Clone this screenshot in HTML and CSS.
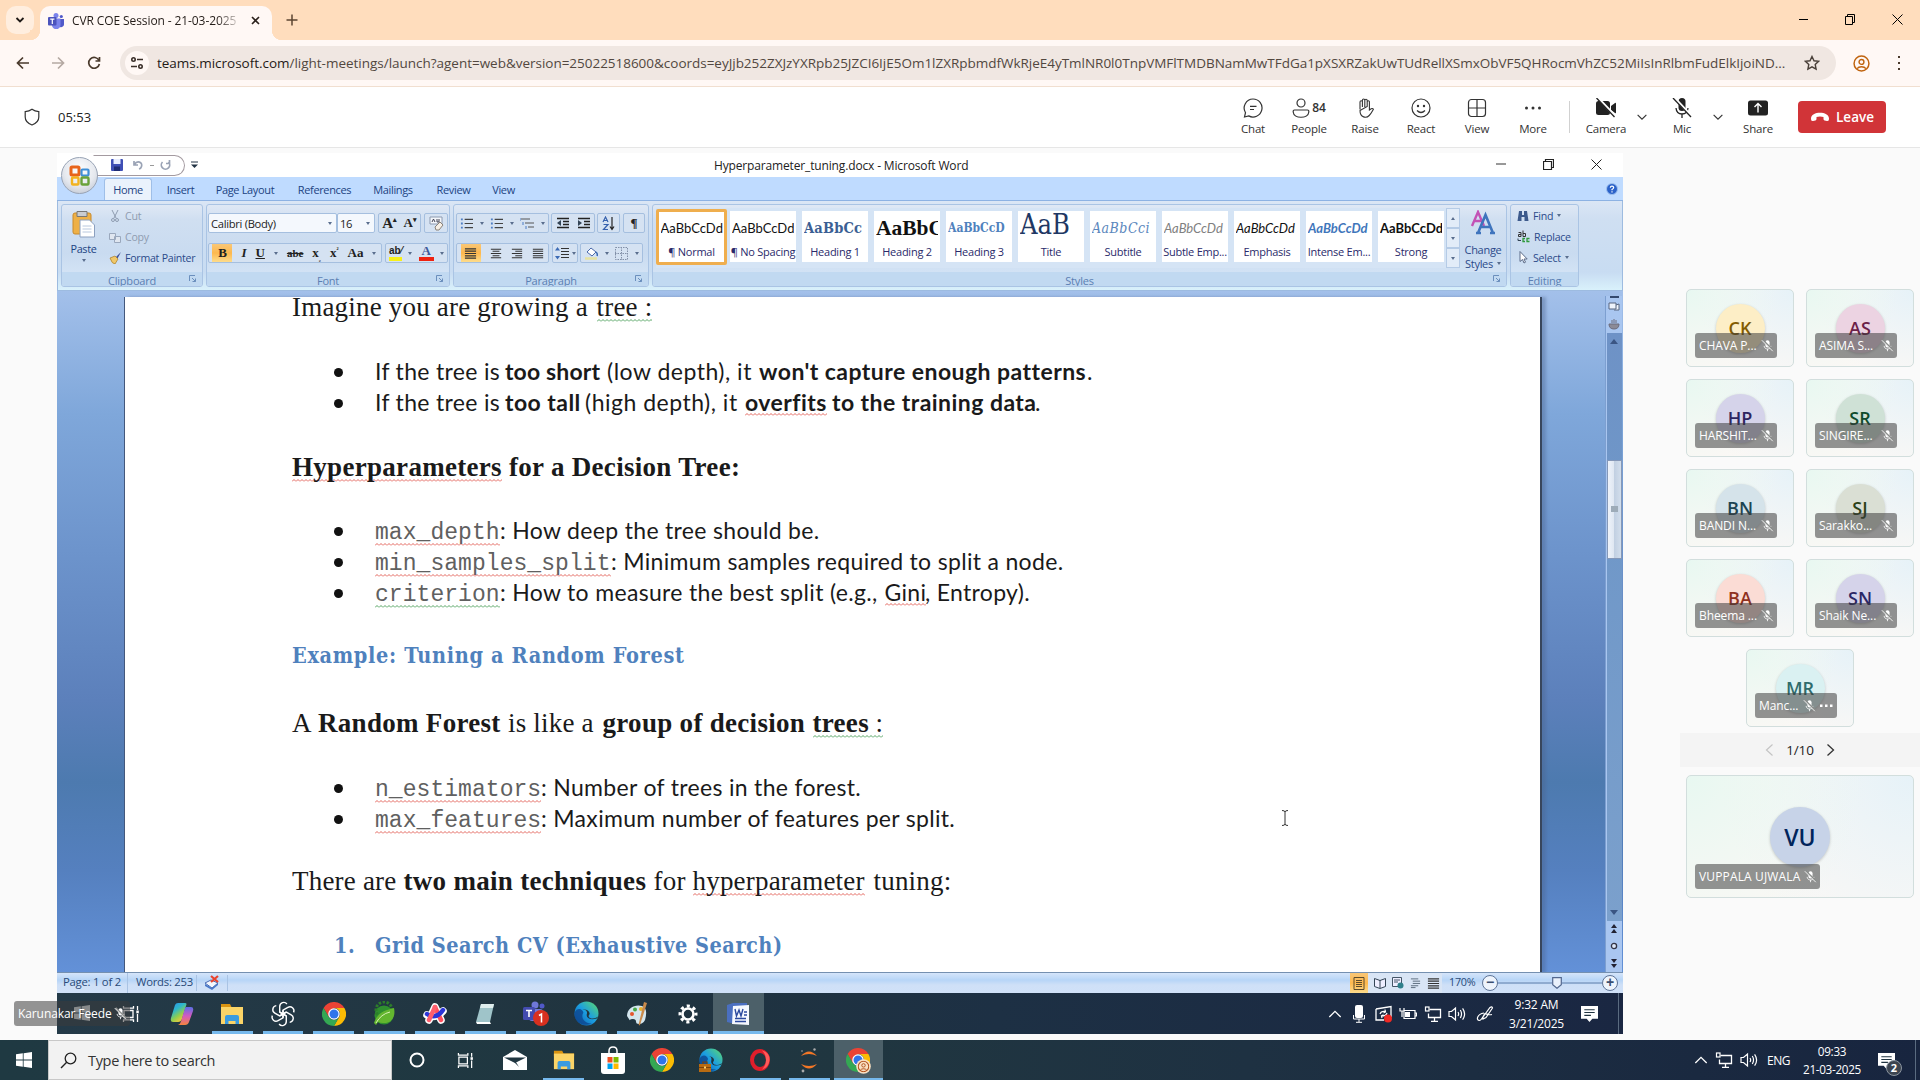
FILE: index.html
```html
<!DOCTYPE html>
<html lang="en">
<head>
<meta charset="utf-8">
<title>CVR COE Session - 21-03-2025</title>
<link rel="stylesheet" href="styles.css">
</head>
<body>
<svg class="defs" aria-hidden="true">
  <defs>
    <linearGradient id="gEdge" x1="0" y1="1" x2="1" y2="0"><stop offset="0" stop-color="#0c59a4"/><stop offset=".5" stop-color="#1b9de2"/><stop offset="1" stop-color="#5fdc6a"/></linearGradient>
    <linearGradient id="gCop" x1="0" y1="0" x2=".6" y2="1"><stop offset="0" stop-color="#2a8df4"/><stop offset=".4" stop-color="#2fb7c9"/><stop offset=".7" stop-color="#8fce4e"/><stop offset="1" stop-color="#f5c83d"/></linearGradient>
    <linearGradient id="gCop2" x1="0" y1="0" x2="0" y2="1"><stop offset="0" stop-color="#5a6fe8"/><stop offset=".5" stop-color="#d35bc0"/><stop offset="1" stop-color="#f5843d"/></linearGradient>
    <symbol id="mute" viewBox="0 0 16 16"><rect x="5.500" y="1.500" width="5" height="9" rx="2.500" fill="currentColor"/><path fill="none" stroke="currentColor" d="M3.800 8.500c.3 2.500 2 3.800 4.200 3.800s3.900-1.300 4.200-3.800M8 12.300v2.700"/><path stroke="#8b8e8c" stroke-width="2.200" d="M2 1l13 13"/><path stroke="currentColor" stroke-width="1.100" d="M1 1.500l13.500 13.500"/></symbol>
    <symbol id="win" viewBox="0 0 16 16"><path fill="currentColor" d="M0 2.300L6.800 1.300V7.600H0zM7.600 1.200L16 0V7.600H7.600zM0 8.400H6.800V14.700L0 13.700zM7.600 8.400H16V16L7.600 14.800z"/></symbol>
    <symbol id="taskview" viewBox="0 0 18 18"><path fill="none" stroke="currentColor" stroke-width="1.300" d="M2 5.500h9v7H2zM1.500 1v2.200h10V1M1.500 17v-2.200h10V17M15.500 1v4M15.500 9v8"/><rect x="14.300" y="5.500" width="2.500" height="2.800" fill="currentColor"/></symbol>
    <symbol id="folder" viewBox="0 0 24 24"><path fill="#d99311" d="M1 2h9l1.500 3H23v3H1z"/><path fill="#fbd467" d="M1 5h22v17H1z"/><path fill="#3a9be0" d="M5 22v-7a2 2 0 0 1 2-2h10a2 2 0 0 1 2 2v7h-3.500v-3h-7v3z"/></symbol>
    <symbol id="chrome" viewBox="0 0 48 48"><path fill="#ea4335" d="M24 12H44.800A24 24 0 0 0 3.200 12l10.400 18z"/><path fill="#fbbc04" d="M44.800 12A24 24 0 0 1 24 48l10.400-18A12 12 0 0 0 24 12z"/><path fill="#34a853" d="M3.200 12A24 24 0 0 0 24 48l10.400-18a12 12 0 0 1-20.800 0z"/><circle cx="24" cy="24" r="11.500" fill="#fff"/><circle cx="24" cy="24" r="9" fill="#2f74ea"/></symbol>
    <symbol id="edge" viewBox="0 0 24 24"><circle cx="12" cy="12" r="11.500" fill="url(#gEdge)"/><path fill="#0d4a94" d="M9 11c-3 5 1 11 8 10.500C8 26-1 19 .6 11 3 6 8 7 9 11z" opacity=".85"/><path fill="#203640" d="M23.500 14.500c-2 3-9 3.300-9.500.2-.1-1 1-1.300 1-3C14.500 9 11 7.500 8 8.500c4-.8 5 2 4.300 4-.8 3.500 2.700 6.500 9.700 4.300z"/></symbol>
    <symbol id="net" viewBox="0 0 18 18"><path fill="none" stroke="currentColor" stroke-width="1.300" d="M5.500 4.500h11v8h-12v-4M10.500 12.500v3.500M7 16.300h7"/><rect x="1.500" y="2" width="3.500" height="4" fill="none" stroke="currentColor" stroke-width="1.200"/></symbol>
    <symbol id="vol" viewBox="0 0 18 18"><path fill="none" stroke="currentColor" stroke-width="1.200" d="M1 6.500h2.500l4-3.500v12l-4-3.500H1zM10 7q1.300 2 0 4M12.300 5q2.500 4 0 8M14.600 3.300q4 5.700 0 11.400"/></symbol>
    <symbol id="up" viewBox="0 0 16 16"><path fill="none" stroke="currentColor" stroke-width="1.500" d="M1.500 11.500L8 5l6.500 6.500"/></symbol>
    <symbol id="down" viewBox="0 0 16 16"><path fill="none" stroke="currentColor" stroke-width="1.300" d="M3 5.500l5 5 5-5"/></symbol>
    <symbol id="note" viewBox="0 0 18 18"><path fill="currentColor" d="M0 1h18v13.500h-6L9 18l-3-3.500H0z"/><path stroke="#1f3340" stroke-width="1.200" d="M3.500 5h11M3.500 8h11M3.500 11h7"/></symbol>
    <symbol id="launch" viewBox="0 0 8 8"><path fill="none" stroke="#6b8fbd" d="M.5 6V.5H6M3 3l3.500 3.500M6.500 3.500v3h-3"/></symbol>
    <symbol id="lines" viewBox="0 0 14 14"><path stroke="#333" stroke-width="1.200" d="M1 2h12M1 4.500h12M1 7h12M1 9.500h12M1 12h12"/></symbol>
    <symbol id="bullets" viewBox="0 0 14 14"><path stroke="#444" stroke-width="1.200" d="M5 2.500h9M5 7h9M5 11.500h9"/><path stroke="#4c7cc4" stroke-width="2" d="M1 2.500h2M1 7h2M1 11.500h2"/></symbol>
    <symbol id="person" viewBox="0 0 16 16"><circle cx="8" cy="8" r="7" fill="none" stroke="currentColor" stroke-width="1.400"/><circle cx="8" cy="6.500" r="2.300" fill="none" stroke="currentColor" stroke-width="1.300"/><path fill="none" stroke="currentColor" stroke-width="1.300" d="M3.800 12.800c1.800-2.400 6.600-2.400 8.400 0"/></symbol>
  </defs>
</svg>

<div class="screen">
  <header class="tabstrip">
    <button class="tabsearch"><svg width="10" height="10" viewBox="0 0 10 10"><path d="M1.500 3l3.500 3.500L8.500 3" fill="none" stroke="#1f1a17" stroke-width="1.800"/></svg></button>
    <div class="tab">
      <svg width="16" height="16" viewBox="0 0 16 16"><circle cx="8" cy="2.600" r="2.500" fill="#7b83eb"/><circle cx="13.300" cy="3.500" r="1.600" fill="#5059c9"/><path fill="#5059c9" d="M10 6h6v5a3 3 0 0 1-4 3z"/><path fill="#7b83eb" d="M4 5.500h8.500V12a4.200 4.200 0 0 1-8.500 0z"/><rect y="4" width="8.500" height="8.500" rx="1" fill="#4b53bc"/><path stroke="#fff" stroke-width="1.200" d="M2.200 6.200h4.200M4.300 6v5"/></svg>
      <span class="tabtitle">CVR COE Session - 21-03-2025</span>
      <svg width="9" height="9" viewBox="0 0 9 9"><path d="M1 1l7 7M8 1L1 8" stroke="#2b211c" stroke-width="1.600"/></svg>
    </div>
    <svg class="newtab" width="12" height="12" viewBox="0 0 12 12"><path d="M6 .5v11M.5 6h11" stroke="#5c4430" stroke-width="1.500"/></svg>
    <div class="wincontrols">
      <svg width="10" height="10" viewBox="0 0 10 10"><path d="M0 5.500h9" stroke="#000"/></svg>
      <svg width="11" height="11" viewBox="0 0 11 11"><path d="M.5 2.500h7v8h-7zM2.500 2.500v-2h7v8h-2" fill="none" stroke="#000"/></svg>
      <svg width="11" height="11" viewBox="0 0 11 11"><path d="M.5.5l10 10M10.500.5l-10 10" stroke="#000"/></svg>
    </div>
  </header>
  <div class="addressbar">
    <svg width="14" height="14" viewBox="0 0 14 14"><path d="M13 7H1.500M7 1.500L1.500 7 7 12.500" fill="none" stroke="#4a3a2c" stroke-width="1.700"/></svg>
    <svg width="14" height="14" viewBox="0 0 14 14"><path d="M1 7h11.500M7 1.500L12.500 7 7 12.500" fill="none" stroke="#b5a9a2" stroke-width="1.700"/></svg>
    <svg width="14" height="14" viewBox="0 0 14 14"><path d="M12 4.500A5.400 5.400 0 1 0 12.400 8M12.500 1v4H8.500" fill="none" stroke="#4a3a2c" stroke-width="1.700"/></svg>
    <div class="omnibox">
      <span class="site"><svg width="14" height="14" viewBox="0 0 14 14"><g fill="none" stroke="#3a2f29" stroke-width="1.600"><circle cx="3.500" cy="3.500" r="1.700"/><path d="M7 3.500h6M1 10.500h6"/><circle cx="10.500" cy="10.500" r="1.700"/></g></svg></span>
      <span class="url"><b>teams.microsoft.com</b>/light-meetings/launch?agent=web&amp;version=25022518600&amp;coords=eyJjb252ZXJzYXRpb25JZCI6IjE5Om1lZXRpbmdfWkRjeE4yTmlNR0l0TnpVMFlTMDBNamMwTFdGa1pXSXRZakUwTUdRellXSmxObVF5QHRocmVhZC52MiIsInRlbmFudElkIjoiND...</span>
      <svg class="star" width="16" height="16" viewBox="0 0 16 16"><path d="M8 1.500l2 4.300 4.600.5-3.400 3.200.9 4.700L8 11.900l-4.100 2.300.9-4.700L1.400 6.300 6 5.800z" fill="none" stroke="#4a4039" stroke-width="1.400"/></svg>
    </div>
    <svg class="profile" width="17" height="17"><use href="#person"/></svg>
    <svg width="4" height="16" viewBox="0 0 4 16"><path d="M1 1h2v2H1zM1 7h2v2H1zM1 13h2v2H1z" fill="#4a3a2c"/></svg>
  </div>

  <div class="meetingbar">
    <svg width="18" height="18" viewBox="0 0 18 18"><path d="M9 1.200c2 1.500 4.200 2.200 6.800 2.400V9c0 3.800-2.500 6.400-6.800 8-4.300-1.600-6.800-4.200-6.800-8V3.600C4.800 3.400 7 2.700 9 1.200z" fill="none" stroke="#333" stroke-width="1.200"/></svg>
    <span class="timer">05:53</span>
    <div class="tools">
      <div class="tool"><svg width="20" height="20" viewBox="0 0 20 20"><path d="M10 1a9 9 0 1 1-4.300 16.900L1.500 19l1-4.300A9 9 0 0 1 10 1zM7 8.300h6.500M7 11.500h4" fill="none" stroke="#333" stroke-width="1.200"/></svg><span>Chat</span></div>
      <div class="tool"><div class="count"><svg width="18" height="20" viewBox="0 0 18 20"><circle cx="9" cy="5" r="4" fill="none" stroke="#333" stroke-width="1.200"/><path d="M2.500 12h13q1.500 0 1.300 2c-.5 7-15.100 7-15.600 0q-.2-2 1.300-2z" fill="none" stroke="#333" stroke-width="1.200"/></svg><b>84</b></div><span>People</span></div>
      <div class="tool"><svg width="18" height="20" viewBox="0 0 18 20"><path d="M4 11.500V4q0-1.300 1.200-1.300T6.400 4v5M6.400 8.500V2.300Q6.400 1 7.600 1t1.200 1.300V9M8.800 8.500v-6q0-1.200 1.200-1.200t1.200 1.200V9M11.200 8.500V4q0-1.200 1.100-1.200T13.400 4v8c2-1.500 3.300-2 4-.8-1.400 2.300-2.400 4.500-4.200 6.300C10.500 20.300 4 20 4 12.500z" fill="none" stroke="#333" stroke-width="1.100"/></svg><span>Raise</span></div>
      <div class="tool"><svg width="20" height="20" viewBox="0 0 20 20"><circle cx="10" cy="10" r="9" fill="none" stroke="#333" stroke-width="1.200"/><circle cx="7" cy="8" r="1.200" fill="#333"/><circle cx="13" cy="8" r="1.200" fill="#333"/><path d="M6 12.500q4 4 8 0" fill="none" stroke="#333" stroke-width="1.200"/></svg><span>React</span></div>
      <div class="tool"><svg width="20" height="20" viewBox="0 0 20 20"><rect x="1.500" y="1.500" width="17" height="17" rx="3" fill="none" stroke="#333" stroke-width="1.200"/><path d="M10 1.500v17M1.500 10h17" stroke="#333" stroke-width="1.200"/></svg><span>View</span></div>
      <div class="tool"><svg width="20" height="20" viewBox="0 0 20 20"><circle cx="3.500" cy="10" r="1.500" fill="#333"/><circle cx="10" cy="10" r="1.500" fill="#333"/><circle cx="16.500" cy="10" r="1.500" fill="#333"/></svg><span>More</span></div>
    </div>
    <i class="divider"></i>
    <div class="devices">
      <div class="tool"><svg width="22" height="20" viewBox="0 0 22 20"><rect x="1" y="3" width="14" height="14" rx="2.500" fill="#222"/><path d="M16 8l4-3q1-.6 1 .5v9q0 1.100-1 .5l-4-3z" fill="#222"/><path d="M3 0l18 19" stroke="#fff" stroke-width="2.600"/><path d="M1.500 0l18 19" stroke="#222" stroke-width="1.300"/></svg><span>Camera</span></div>
      <svg class="caret first" width="14" height="14"><use href="#down"/></svg>
      <div class="tool mic"><svg width="20" height="20" viewBox="0 0 20 20"><rect x="6.500" y="0" width="7" height="13" rx="3.500" fill="#222"/><path d="M4 10q.5 6 6 6t6-6M10 16v4" fill="none" stroke="#222" stroke-width="1.300"/><path d="M2.500 0l17 18" stroke="#fff" stroke-width="2.600"/><path d="M1 0l18 19" stroke="#222" stroke-width="1.300"/></svg><span>Mic</span></div>
      <svg class="caret" width="14" height="14"><use href="#down"/></svg>
      <div class="tool share"><svg width="20" height="20" viewBox="0 0 20 20"><rect y="2.500" width="20" height="15" rx="2.500" fill="#222"/><path d="M10 14.500V6M6.500 9L10 5.500 13.500 9" fill="none" stroke="#fff" stroke-width="1.400"/></svg><span>Share</span></div>
    </div>
    <button class="leave"><svg width="20" height="10" viewBox="0 0 20 10"><path d="M10 .8c4.500 0 9 2 9 5.700 0 2-.6 2.600-2 2.400l-2.300-.5c-1-.3-1.200-.8-1.200-2V5.100c-2-.8-5-.8-7 0v1.300c0 1.200-.2 1.700-1.200 2L3 8.900C1.600 9.100 1 8.500 1 6.500 1 2.800 5.500.8 10 .8z" fill="#fff"/></svg><span>Leave</span></button>
  </div>

  <main class="stage">
    <section class="shared">
      <div class="wtitle">
        <div class="qat">
          <svg width="12" height="12" viewBox="0 0 12 12"><rect width="12" height="12" rx="1" fill="#3f4fb5"/><rect x="2.500" y="0" width="7" height="5" fill="#e8edff"/><rect x="3" y="7.500" width="6" height="4.500" fill="#1f2c74"/></svg>
          <svg width="12" height="12" viewBox="0 0 12 12"><path d="M2 2v4h4M2.500 5.500C5 1 11 3 9.500 7.500Q9 9.500 7 10" fill="none" stroke="#9aa3b5" stroke-width="1.700"/></svg>
          <i class="dash"></i>
          <svg width="12" height="12" viewBox="0 0 12 12"><path d="M2.500 3a4.200 4.200 0 1 0 6 0M9.500 1v3.500H6" fill="none" stroke="#9aa3b5" stroke-width="1.700"/></svg>
        </div>
        <svg class="qatmore" width="7" height="8" viewBox="0 0 7 8"><path d="M0 1h7" stroke="#234"/><path d="M0 3.500h7L3.500 7z" fill="#234"/></svg>
        <span class="doctitle">Hyperparameter_tuning.docx - Microsoft Word</span>
        <div class="wwin">
          <svg width="10" height="10" viewBox="0 0 10 10"><path d="M0 5h10" stroke="#333"/></svg>
          <svg width="11" height="11" viewBox="0 0 11 11"><path d="M.5 2.500h8v8h-8zM2.500 2.500v-2h8v8h-2" fill="none" stroke="#222" stroke-width="1.200"/></svg>
          <svg width="11" height="11" viewBox="0 0 11 11"><path d="M.5.5l10 10M10.500.5l-10 10" stroke="#222"/></svg>
        </div>
        <div class="orb"><svg width="24" height="24" viewBox="0 0 24 24"><g fill="none" stroke-width="3"><rect x="3" y="3" width="8" height="8" rx="1" stroke="#e8641b"/><rect x="13.500" y="5.500" width="7" height="6" rx="1" stroke="#3f8fd6" stroke-width="2.200"/><rect x="4" y="13.500" width="6.500" height="7" rx="1" stroke="#f2b320" stroke-width="2.400"/><rect x="13.500" y="13.500" width="7" height="7" rx="1" stroke="#6aa23a" stroke-width="2.400"/></g></svg></div>
      </div>
      <nav class="wtabs">
        <span class="on">Home</span><span>Insert</span><span>Page Layout</span><span>References</span><span>Mailings</span><span>Review</span><span>View</span>
        <svg class="help" width="12" height="12" viewBox="0 0 12 12"><circle cx="6" cy="6" r="5.500" fill="#2b62c9" stroke="#9fc0ee"/><path d="M4.300 4.700q.1-1.500 1.700-1.500t1.700 1.400Q7.700 5.700 6 6.500v.8M6 8.200v1.200" fill="none" stroke="#fff" stroke-width="1.200"/></svg>
      </nav>
      <div class="ribbon">
        <div class="group clip">
          <div class="gbody">
            <div class="paste"><svg width="24" height="28" viewBox="0 0 24 28"><rect x="1" y="3" width="18" height="21" rx="2" fill="#eeb047" stroke="#c98a2b"/><path d="M5 1.500h10v5H5z" fill="#c9ccd2" stroke="#777"/><path d="M8 10h9.500l5 5v12H8z" fill="#fff" stroke="#8ca0bf"/><path d="M10.500 16h9M10.500 19h9M10.500 22h9" stroke="#b9c8de"/></svg><span>Paste</span><i class="tri"></i></div>
            <div class="clipcmds">
              <div class="cmd dim"><svg width="12" height="12" viewBox="0 0 12 12"><path d="M3 0l4 8M9 0L5 8" stroke="#8f9cb0"/><circle cx="4" cy="10" r="1.500" fill="none" stroke="#8f9cb0"/><circle cx="8" cy="10" r="1.500" fill="none" stroke="#8f9cb0"/></svg><span>Cut</span></div>
              <div class="cmd dim"><svg width="12" height="12" viewBox="0 0 12 12"><path d="M.5 2.500h6v6h-6zM5.500 5.500h6v6h-6z" fill="#dfe6f0" stroke="#9aa8bd"/></svg><span>Copy</span></div>
              <div class="cmd"><svg width="12" height="12" viewBox="0 0 12 12"><path d="M12 0L7 5l1.500 1.500z" fill="#3b4f9a"/><path d="M1 6l5-2 3 3-3 5q-3 0-5-6z" fill="#f0c869" stroke="#a77a22" stroke-width=".7"/></svg><span>Format Painter</span></div>
            </div>
          </div>
          <div class="glabel"><span>Clipboard</span><svg width="8" height="8"><use href="#launch"/></svg></div>
        </div>
        <div class="group font">
          <div class="gbody rows">
            <div class="brow">
              <div class="box white f1"><span>Calibri (Body)</span><i class="tri"></i></div>
              <div class="box white f2"><span>16</span><i class="tri"></i></div>
              <div class="box f3"><b class="big">A<sup>▴</sup></b><b>A<sup>▾</sup></b></div>
              <div class="box f4"><svg width="15" height="15" viewBox="0 0 15 15"><path d="M1 1h12v7H1z" fill="#f3f6fb" stroke="#8c9ab0"/><path d="M3 6l1.500-3L6 6M8 3v3h2V3" fill="none" stroke="#445"/><path d="M6 11l5-5 3 3-4 5H7z" fill="#f6efe6" stroke="#8b8277"/></svg></div>
            </div>
            <div class="brow">
              <div class="box f5"><span class="hot"><b>B</b></span><i class="it">I</i><u>U</u><i class="tri"></i><s>abe</s><b>x<sub>₂</sub></b><b>x<sup>²</sup></b><b>Aa</b><i class="tri"></i></div>
              <div class="box f6"><span class="hl">ab⁄</span><i class="tri"></i><span class="fc">A</span><i class="tri"></i></div>
            </div>
          </div>
          <div class="glabel"><span>Font</span><svg width="8" height="8"><use href="#launch"/></svg></div>
        </div>
        <div class="group para">
          <div class="gbody rows">
            <div class="brow">
              <div class="box p1"><svg width="13" height="13"><use href="#bullets"/></svg><i class="tri"></i><svg width="13" height="13"><use href="#bullets"/></svg><i class="tri"></i><svg width="14" height="13" viewBox="0 0 14 13"><path d="M1 2h9M5 6h9M8 10h6" stroke="#555"/><path d="M0 1v3M3 5v3M6 9v3" stroke="#4c7cc4"/></svg><i class="tri"></i></div>
              <div class="box p2"><svg width="14" height="13" viewBox="0 0 14 13"><path d="M1 1.500h12M7 4.500h6M7 7.500h6M1 10.500h12" stroke="#222" stroke-width="1.300"/><path d="M5 3v6L1 6z" fill="#345"/></svg><svg width="14" height="13" viewBox="0 0 14 13"><path d="M1 1.500h12M7 4.500h6M7 7.500h6M1 10.500h12" stroke="#222" stroke-width="1.300"/><path d="M1 3v6l4-3z" fill="#345"/></svg></div>
              <div class="box p3"><svg width="13" height="15" viewBox="0 0 13 15"><path d="M1 6l2.500-5L6 6M2 4.500h3M1.500 8.500H6l-4.500 5H6" fill="none" stroke="#3560ad" stroke-width="1.200"/><path d="M10 1v12M8 10.500l2 3 2-3" fill="none" stroke="#222" stroke-width="1.200"/></svg></div>
              <div class="box p4"><b>¶</b></div>
            </div>
            <div class="brow">
              <div class="box p1"><span class="hot"><svg width="13" height="13"><use href="#lines"/></svg></span><svg width="12" height="13" viewBox="0 0 14 14"><path stroke="#333" stroke-width="1.200" d="M1 2h12M3 4.500h8M1 7h12M3 9.500h8M1 12h12"/></svg><svg width="12" height="13" viewBox="0 0 14 14"><path stroke="#333" stroke-width="1.200" d="M1 2h12M5 4.500h8M1 7h12M5 9.500h8M1 12h12"/></svg><svg width="12" height="13"><use href="#lines"/></svg></div>
              <div class="box p5"><svg width="14" height="13" viewBox="0 0 14 13"><path stroke="#333" d="M6 1.500h8M6 4.500h8M6 7.500h8M6 10.500h8"/><path fill="#3c6bb5" d="M2.500 0L5 3.500H0zM2.500 12.500L5 9H0z"/></svg><i class="tri"></i></div>
              <div class="box p6"><svg width="14" height="14" viewBox="0 0 14 14"><path d="M3 6l4-4 5 4-4 4z" fill="#fff" stroke="#4a69a8"/><path d="M12 6q2 2 1 4" fill="none" stroke="#3c6bb5" stroke-width="1.500"/><path d="M1 12.500h12" stroke="#e6e2a0" stroke-width="2.500"/></svg><i class="tri"></i><svg width="13" height="13" viewBox="0 0 13 13"><path d="M.5.5h12v12H.500zM6.500 0v13M0 6.500h13" fill="none" stroke="#8290a8" stroke-dasharray="1.500 1"/></svg><i class="tri"></i></div>
            </div>
          </div>
          <div class="glabel"><span>Paragraph</span><svg width="8" height="8"><use href="#launch"/></svg></div>
        </div>
        <div class="group styles">
          <div class="gbody">
            <div class="gallery">
              <div class="sty sel"><p class="cal">AaBbCcDd</p><span>¶ Normal</span></div>
              <div class="sty"><p class="cal">AaBbCcDd</p><span>¶ No Spacing</span></div>
              <div class="sty"><p class="cam c1">AaBbCc</p><span>Heading 1</span></div>
              <div class="sty"><p class="tim">AaBbC</p><span>Heading 2</span></div>
              <div class="sty"><p class="cam c3">AaBbCcD</p><span>Heading 3</span></div>
              <div class="sty"><p class="ttl">AaB</p><span>Title</span></div>
              <div class="sty"><p class="sub">AaBbCci</p><span>Subtitle</span></div>
              <div class="sty"><p class="cal it gr">AaBbCcDd</p><span>Subtle Emp...</span></div>
              <div class="sty"><p class="cal it">AaBbCcDd</p><span>Emphasis</span></div>
              <div class="sty"><p class="cal it bl">AaBbCcDd</p><span>Intense Em...</span></div>
              <div class="sty"><p class="cal bd">AaBbCcDd</p><span>Strong</span></div>
            </div>
            <div class="gscroll"><span><i class="tri upt"></i></span><span><i class="tri"></i></span><span><i class="tri bar"></i></span></div>
            <div class="change"><svg width="26" height="26" viewBox="0 0 26 26"><path d="M2 16L8 2l6 14M4 11h8" fill="none" stroke="#c352b5" stroke-width="2.400"/><path d="M8 23L15.500 5 23 23M11 17h9M6 23h5M20 23h5" fill="none" stroke="#3f74bd" stroke-width="2.600"/></svg><span>Change</span><span class="drop">Styles <i class="tri"></i></span></div>
          </div>
          <div class="glabel"><span>Styles</span><svg width="8" height="8"><use href="#launch"/></svg></div>
        </div>
        <div class="group edit">
          <div class="gbody editb">
            <div class="cmd"><svg width="12" height="12" viewBox="0 0 12 12"><path d="M2 1h3v4h2V1h3l1.500 10h-4V7h-3v4h-4z" fill="#3d5a8c"/></svg><span>Find</span><i class="tri"></i></div>
            <div class="cmd"><svg width="13" height="13" viewBox="0 0 13 13"><path d="M1.500 2.500h2.500v4H1.500v-2H4M6 .5v6h2.500v-3H6" fill="none" stroke="#333"/><path d="M8 8.500H6v3h2M12.500 8.500H10v3h2.500" fill="none" stroke="#2f9a3c" stroke-width="1.300"/><path d="M1 8.500v2h3" fill="none" stroke="#345"/></svg><span>Replace</span></div>
            <div class="cmd"><svg width="12" height="13" viewBox="0 0 12 13"><path d="M3 .5v10l2.500-2 1.500 3.500 1.500-.8L7 8h3.200z" fill="#fff" stroke="#5b6b88"/></svg><span>Select</span><i class="tri"></i></div>
          </div>
          <div class="glabel"><span>Editing</span></div>
        </div>
      </div>
      <div class="canvas">
        <article class="page">
          <div class="ln l1"><span class="t">Imagine you are growing a</span><span class="t"><span class="sg">tree :</span></span></div>
          <div class="ln l2"><span class="dot"></span><span class="c">If the tree is</span><span class="c b">too short</span><span class="c wide">(low depth), it</span><span class="c b">won't capture enough patterns</span><span class="c">.</span></div>
          <div class="ln l3"><span class="dot"></span><span class="c">If the tree is</span><span class="c b">too tall</span><span class="c wide">(high depth), it</span><span class="c b"><span class="sr">overfits</span></span><span class="c b">to the training data</span><span class="c">.</span></div>
          <div class="ln l4"><span class="t b"><span class="sr">Hyperparameters</span></span><span class="t b">for a Decision Tree:</span></div>
          <div class="ln l5"><span class="dot"></span><span class="m"><span class="sr">max_depth</span></span><span class="c">: How deep the tree should be.</span></div>
          <div class="ln l6"><span class="dot"></span><span class="m"><span class="sr">min_samples_split</span></span><span class="c">: Minimum samples required to split a node.</span></div>
          <div class="ln l7"><span class="dot"></span><span class="m"><span class="sg">criterion</span></span><span class="c">: How to measure the best split (e.g.,</span><span class="c"><span class="sr">Gini</span></span><span class="c">, Entropy).</span></div>
          <div class="ln l8"><span class="h">Example: Tuning a Random Forest</span></div>
          <div class="ln l9"><span class="t">A</span><span class="t b">Random Forest</span><span class="t">is like a</span><span class="t b">group of decision</span><span class="t b"><span class="sg">trees</span></span><span class="t"><span class="sg">&nbsp;:</span></span></div>
          <div class="ln l10"><span class="dot"></span><span class="m"><span class="sr">n_estimators</span></span><span class="c">: Number of trees in the forest.</span></div>
          <div class="ln l11"><span class="dot"></span><span class="m"><span class="sr">max_features</span></span><span class="c">: Maximum number of features per split.</span></div>
          <div class="ln l12"><span class="t">There are</span><span class="t b">two main techniques</span><span class="t">for</span><span class="t"><span class="sr">hyperparameter</span></span><span class="t">tuning:</span></div>
          <div class="ln l13"><span class="h">1.</span><span class="h">Grid Search CV (Exhaustive Search)</span></div>
          <svg class="ibeam" width="8" height="16" viewBox="0 0 8 16"><path d="M1 .5q3 0 3 1.500 0-1.500 3-1.500M4 2v12M1 15.500q3 0 3-1.500 0 1.500 3 1.500" fill="none" stroke="#333"/></svg>
        </article>
        <div class="vscroll">
          <i class="split"></i>
          <svg class="v1" width="12" height="10" viewBox="0 0 12 10"><path d="M1 2h7v6H1zM8 4l3-1v6H6" fill="#eef3fb" stroke="#56657f"/></svg>
          <svg class="v2" width="12" height="12" viewBox="0 0 12 12"><path d="M1 6h10q0 5-5 5T1 6zM4 5V2M6 5V1M8 5V2" fill="#8b8a96" stroke="#6c6c7c"/></svg>
          <div class="track"><i class="tri upt"></i><div class="thumb"></div><i class="tri"></i></div>
          <svg class="v3" width="8" height="10" viewBox="0 0 8 10"><path d="M4 0l3 4H1zM4 5l3 4H1z" fill="#223"/></svg>
          <svg class="v4" width="8" height="8" viewBox="0 0 8 8"><circle cx="4" cy="4" r="2.600" fill="#dbe6f7" stroke="#334" stroke-width="1.300"/></svg>
          <svg class="v4" width="8" height="10" viewBox="0 0 8 10"><path d="M4 5L1 1h6zM4 10L1 6h6z" fill="#223"/></svg>
        </div>
      </div>
      <div class="status">
        <span class="s1">Page: 1 of 2</span><span class="s2">Words: 253</span>
        <span class="s3"><svg width="16" height="16" viewBox="0 0 16 16"><path d="M1 8l6-3 7 3-6 5z" fill="#f4f7fd" stroke="#4a6cb5"/><path d="M1 9v2l7 4 6-5V8l-6 5z" fill="#4a78c8"/><path d="M7 1l7 6M14 1L7 7" stroke="#e8432e" stroke-width="2.200"/></svg></span>
        <div class="views"><span class="hot"><svg width="12" height="13" viewBox="0 0 12 13"><path d="M1 .5h10v12H1zM3 3.500h6M3 5.500h6M3 7.500h6M3 9.500h6" fill="none" stroke="#5b4a2a"/></svg></span><svg width="12" height="12" viewBox="0 0 12 12"><path d="M.5 1.500l5.500 2 5.500-2v8l-5.500 2-5.500-2zM6 3v8" fill="#eef" stroke="#345"/></svg><svg width="12" height="12" viewBox="0 0 12 12"><path d="M.5.500h9v9h-9zM2 3h6M2 5h4" fill="#eef" stroke="#456"/><circle cx="8.500" cy="8.500" r="3" fill="#2f7f8a"/></svg><svg width="11" height="12" viewBox="0 0 12 12"><path d="M1 1.500h8M3 4h8M3 6.500h8M1 9h8M1 11h5" stroke="#567"/></svg><svg width="13" height="13"><use href="#lines"/></svg></div>
        <span class="pct">170%</span>
        <div class="zoomer"><i class="rnd">−</i><i class="rail"></i><svg width="10" height="12" viewBox="0 0 10 12"><path d="M.7.7h8.600v7L5 11.300.7 7.700z" fill="#e9f0fb" stroke="#53688f" stroke-width="1.200"/></svg><i class="rail r2"></i><i class="rnd">+</i></div>
      </div>
      <div class="itask">
        <svg class="iwin" width="16" height="16"><use href="#win"/></svg>
        <div class="apps">
          <span><svg width="18" height="18"><use href="#taskview"/></svg></span>
          <span><svg width="24" height="24" viewBox="0 0 24 24"><path d="M8 1h7q2 0 1.300 2L12 17q-1 3-4 3H3q-3 0-2-4L5 3q.8-2 3-2z" fill="url(#gCop)"/><path d="M16 5h5q3 0 2 4l-4 11q-1 3-4 3H8q2-.5 3-3.500L15 6z" fill="url(#gCop2)"/></svg></span>
          <span class="run"><svg width="24" height="24"><use href="#folder"/></svg></span>
          <span class="run"><svg width="26" height="26" viewBox="0 0 24 24"><g fill="none" stroke="#fff" stroke-width="1.300"><path id="pt" d="M12 15.500v-7l4.500-2.600a3.700 3.700 0 0 1 5.300 4.600"/><use href="#pt" transform="rotate(60 12 12)"/><use href="#pt" transform="rotate(120 12 12)"/><use href="#pt" transform="rotate(180 12 12)"/><use href="#pt" transform="rotate(240 12 12)"/><use href="#pt" transform="rotate(300 12 12)"/></g></svg></span>
          <span class="run"><svg width="24" height="24"><use href="#chrome"/></svg></span>
          <span class="run"><svg width="26" height="26" viewBox="0 0 26 26"><circle cx="13" cy="14" r="9.500" fill="#2f8f2f"/><circle cx="13" cy="9" r="8" fill="none" stroke="#2c7d2a" stroke-width="3" stroke-dasharray="2.500 1.500"/><path d="M3 22C6 12 14 9 23 7c2 9-3 16-11 15q-3 0-5-1l-2 3z" fill="#63b62f"/><path d="M5 22q5-9 14-11" fill="none" stroke="#d7f0b5"/></svg></span>
          <span class="run"><svg width="24" height="24" viewBox="0 0 24 24"><g fill="none" stroke-linecap="round" stroke-linejoin="round" stroke-width="7.500" stroke="#fff"><path d="M6 18L12 5l6 13M4 13q9 4 16-4"/></g><g fill="none" stroke-linecap="round" stroke-linejoin="round" stroke-width="4.500"><path d="M12 5l6 13" stroke="#ff4f5e"/><path d="M4 12q9 6 16-4" stroke="#2b35d8"/><path d="M6 18L12 5" stroke="#ff5f6e"/></g></svg></span>
          <span class="run"><svg width="24" height="24" viewBox="0 0 24 24"><path d="M8 2h13l-4 18H3z" fill="#9fc4c9"/><path d="M8 2h13l-1 4H7z" fill="#dfeeee"/><path d="M3 20h14l1 2H4z" fill="#fff"/></svg></span>
          <span class="run"><svg width="28" height="26" viewBox="0 0 28 26"><circle cx="13" cy="4" r="3.500" fill="#6f78d8"/><circle cx="20" cy="5" r="2.500" fill="#5059c9"/><rect x="7" y="8" width="14" height="12" rx="3" fill="#6f78d8"/><rect x="1" y="6" width="12" height="13" rx="1.500" fill="#434bb0"/><path d="M4 9.500h6M7 9.500v6.500" stroke="#fff" stroke-width="1.600"/><circle cx="19" cy="17" r="8" fill="#d8301f"/><path d="M17 14.500l2.500-1.500v8.500" fill="none" stroke="#fff" stroke-width="1.500"/></svg></span>
          <span class="run"><svg width="25" height="25"><use href="#edge"/></svg></span>
          <span class="run"><svg width="24" height="26" viewBox="0 0 24 26"><path d="M2 15C2 7 10 3 17 5q5 2 4 9-.6 9-7 9-3 0-3-2.500T8 18t-3 1-3-4z" fill="#d4e6ee"/><circle cx="7" cy="13" r="2" fill="#e4572e"/><circle cx="10" cy="8.500" r="2" fill="#48a948"/><circle cx="16" cy="8" r="2" fill="#e9b12d"/><path d="M19 1l3 1-7 22-1 .5-.3-1.500z" fill="#c98a4b"/></svg></span>
          <span class="run"><svg width="20" height="20" viewBox="0 0 20 20"><circle cx="10" cy="10" r="5.500" fill="none" stroke="#fff" stroke-width="2.600"/><circle cx="10" cy="10" r="8" fill="none" stroke="#fff" stroke-width="3" stroke-dasharray="3.100 3.180" stroke-dashoffset="1.500"/></svg></span>
          <span class="run act"><svg width="24" height="24" viewBox="0 0 24 24"><path d="M1 3l6-2h14v3L9 22 1 20z" fill="#4a6fc0"/><path d="M7 4l16-1v20l-17-1z" fill="#f5f8fe"/><path d="M9 7l1.500 7L13 8l2 6 2-7M9 16.500h11M9 19.500h11M18 10h3M18 13h3" fill="none" stroke="#2c4a9e" stroke-width="1.400"/></svg></span>
        </div>
        <div class="itray">
          <svg width="14" height="14"><use href="#up"/></svg>
          <svg class="imic" width="12" height="18" viewBox="0 0 12 18"><rect x="2" width="8" height="13" rx="2" fill="#fff"/><path d="M.5 10v4h11v-4M6 14v3M3 17.300h6" fill="none" stroke="#fff"/></svg>
          <svg width="18" height="18" viewBox="0 0 18 18"><path d="M1 4l15-2.500V12M1 4v11h8" fill="none" stroke="#fff" stroke-width="1.300"/><path d="M5 9q1-3 5-2.500M12 8q-1 3-5 3M10 4.500l.5 2.500-2 1M7 13l-.5-2.200 2-1" fill="none" stroke="#fff" stroke-width="1.200"/><circle cx="13" cy="13.500" r="4" fill="#f02a24"/></svg>
          <svg width="18" height="16" viewBox="0 0 18 16"><path d="M5 4.500h11v8H5zM16.500 7h1v3h-1M1 2v3h4V2M3 5v6" fill="none" stroke="#fff" stroke-width="1.200"/><path d="M6 6h5v5H6z" fill="#fff"/></svg>
          <svg width="18" height="18"><use href="#net"/></svg>
          <svg width="18" height="18"><use href="#vol"/></svg>
          <svg class="pen" width="18" height="18" viewBox="0 0 18 18"><path d="M7 12L14 2.500q2-1.500 2.500.5L10 12.500 7 14zM8 8C1 9 0 15 3 15.500s5-7 6-7 3 2 7 1" fill="none" stroke="#fff" stroke-width="1.200"/></svg>
          <div class="iclock"><span>9:32 AM</span><span>3/21/2025</span></div>
          <svg width="17" height="17"><use href="#note"/></svg>
        </div>
        <div class="nametag host"><span>Karunakar Feede</span><svg width="13" height="13"><use href="#mute"/></svg></div>
      </div>
    </section>

    <aside class="people">
      <div class="tiles">
        <div class="tile"><b class="av a1">CK</b><div class="nametag"><span>CHAVA P...</span><svg width="13" height="13"><use href="#mute"/></svg></div></div>
        <div class="tile"><b class="av a2">AS</b><div class="nametag"><span>ASIMA S...</span><svg width="13" height="13"><use href="#mute"/></svg></div></div>
        <div class="tile"><b class="av a3">HP</b><div class="nametag"><span>HARSHIT...</span><svg width="13" height="13"><use href="#mute"/></svg></div></div>
        <div class="tile"><b class="av a4">SR</b><div class="nametag"><span>SINGIRE...</span><svg width="13" height="13"><use href="#mute"/></svg></div></div>
        <div class="tile"><b class="av a5">BN</b><div class="nametag"><span>BANDI N...</span><svg width="13" height="13"><use href="#mute"/></svg></div></div>
        <div class="tile"><b class="av a6">SJ</b><div class="nametag"><span>Sarakko...</span><svg width="13" height="13"><use href="#mute"/></svg></div></div>
        <div class="tile"><b class="av a7">BA</b><div class="nametag"><span>Bheema ...</span><svg width="13" height="13"><use href="#mute"/></svg></div></div>
        <div class="tile"><b class="av a8">SN</b><div class="nametag"><span>Shaik Ne...</span><svg width="13" height="13"><use href="#mute"/></svg></div></div>
        <div class="tile last"><b class="av a9">MR</b><div class="nametag"><span>Manc...</span><svg width="13" height="13"><use href="#mute"/></svg><svg width="13" height="13" viewBox="0 0 13 13"><path d="M0 5.500h2.500V8H0zM5 5.500h2.500V8H5zM10 5.500h2.500V8H10z" fill="#fff"/></svg></div></div>
      </div>
      <div class="pager"><svg width="9" height="14" viewBox="0 0 9 14"><path d="M7.500 1.500L1.500 7l6 5.500" fill="none" stroke="#c4c4c4" stroke-width="1.200"/></svg><span>1/10</span><svg width="9" height="14" viewBox="0 0 9 14"><path d="M1.500 1.500l6 5.500-6 5.500" fill="none" stroke="#333" stroke-width="1.300"/></svg></div>
      <div class="tile self"><b class="av a10">VU</b><div class="nametag"><span>VUPPALA UJWALA</span><svg width="13" height="13"><use href="#mute"/></svg></div></div>
    </aside>
  </main>

  <footer class="taskbar">
    <div class="start"><svg width="16" height="16"><use href="#win"/></svg></div>
    <div class="search"><svg width="17" height="17" viewBox="0 0 17 17"><circle cx="10.500" cy="6.500" r="5.300" fill="none" stroke="#222" stroke-width="1.300"/><path d="M6.700 10.300L1 16" stroke="#222" stroke-width="1.400"/></svg><span>Type here to search</span></div>
    <div class="tapps">
      <span><svg width="16" height="16" viewBox="0 0 16 16"><circle cx="8" cy="8" r="6.500" fill="none" stroke="#fff" stroke-width="2"/></svg></span>
      <span><svg width="17" height="17"><use href="#taskview"/></svg></span>
      <span><svg width="24" height="20" viewBox="0 0 24 20"><path d="M0 7l12-7 12 7v13H0z" fill="#fff"/><path d="M1 7.500h22L12 13z" fill="#203640"/><path d="M12 13l4 4-5-8z" fill="#203640"/></svg></span>
      <span class="run"><svg width="22" height="22"><use href="#folder"/></svg></span>
      <span><svg width="24" height="28" viewBox="0 0 24 28"><path d="M0 7h24v18a3 3 0 0 1-3 3H3a3 3 0 0 1-3-3z" fill="#fff"/><path d="M8 8V5q0-4 4-4t4 4v3" fill="none" stroke="#fff" stroke-width="1.500"/><path fill="#f25022" d="M6.500 11h5v5.500h-5z"/><path fill="#7fba00" d="M12.500 11h5v5.500h-5z"/><path fill="#00a4ef" d="M6.500 17.500h5V23h-5z"/><path fill="#ffb900" d="M12.500 17.500h5V23h-5z"/></svg></span>
      <span><svg width="24" height="24"><use href="#chrome"/></svg></span>
      <span><svg width="24" height="24" viewBox="0 0 24 24"><use href="#edge"/><path fill="#b86b12" d="M0 16h12v8H0z"/><path d="M4 16v-2h4v2M0 19.500h12" fill="none" stroke="#7a4208" stroke-width="1.200"/><path fill="#ffcf6a" d="M5 18.500h2v2H5z"/></svg></span>
      <span class="run"><svg width="22" height="22" viewBox="0 0 22 22"><ellipse cx="11" cy="11" rx="8" ry="9" fill="none" stroke="#e01e2b" stroke-width="4"/><path d="M13 1.500q8 2 7.500 9.500T13 20.500q4-4 4-9.500t-4-9.500z" fill="#ff5a5a"/></svg></span>
      <span class="run"><svg width="20" height="26" viewBox="0 0 20 26"><path d="M2 9q8-9 16 0-8-4-16 0zM2 17q8 9 16 0-8 4-16 0z" fill="#f37726"/><circle cx="15.500" cy="2.500" r="1.200" fill="#aaa"/><circle cx="4" cy="24" r="1.400" fill="#aaa"/><circle cx="3" cy="4" r=".8" fill="#aaa"/></svg></span>
      <span class="run act"><svg width="26" height="28" viewBox="0 0 26 28"><svg x="1" y="2" width="24" height="24"><use href="#chrome"/></svg><circle cx="18.500" cy="20.500" r="7.300" fill="#f8dfc2"/><svg x="12.500" y="14.500" width="12" height="12" color="#b3541e"><use href="#person"/></svg></svg></span>
    </div>
    <div class="tray">
      <svg width="14" height="14"><use href="#up"/></svg>
      <svg width="18" height="18"><use href="#net"/></svg>
      <svg width="18" height="18"><use href="#vol"/></svg>
      <span class="lang">ENG</span>
      <div class="clock"><span>09:33</span><span>21-03-2025</span></div>
      <div class="notif"><svg width="17" height="17"><use href="#note"/></svg><b>2</b></div>
    </div>
  </footer>
</div>
</body>
</html>
```
FILE: styles.css
```css
* { box-sizing: border-box; }
body { margin: 0; overflow: hidden; font-family: "Open Sans", "Noto Sans", sans-serif; color: #242424; }
svg { display: block; flex: none; }
p { margin: 0; }
button { border: 0; padding: 0; font: inherit; }
.defs { position: absolute; width: 0; height: 0; }
.screen { width: 1920px; height: 1080px; display: flex; flex-direction: column; background: #fafafa; }

/* browser chrome */
.tabstrip { height: 40px; flex: none; display: flex; background: #ffddbd; padding: 6px 17px 0 6px; align-items: flex-start; }
.tabsearch { width: 28px; height: 28px; border-radius: 10px; background: #ffeedf; display: flex; align-items: center; justify-content: center; }
.tab { width: 232px; height: 34px; margin-left: 6px; background: #fff8f5; border-radius: 10px 10px 0 0; display: flex; align-items: center; padding: 0 11px 5px 8px; gap: 8px; position: relative; }
.tab::before, .tab::after { content: ""; position: absolute; bottom: 0; width: 10px; height: 10px; }
.tab::before { left: -10px; background: radial-gradient(circle at 0 0, #ffddbd 10px, #fff8f5 10.500px); }
.tab::after { right: -10px; background: radial-gradient(circle at 100% 0, #ffddbd 10px, #fff8f5 10.500px); }
.tabtitle { width: 171px; font-size: 12px; letter-spacing: -.1px; white-space: nowrap; overflow: hidden; -webkit-mask: linear-gradient(90deg, #000 145px, transparent 170px); color: #231c18; }
.newtab { margin: 8px 0 0 14px; }
.wincontrols { margin: 8px 0 0 auto; display: flex; gap: 36px; }
.addressbar { height: 47px; flex: none; background: #fff8f5; border-bottom: 1px solid #f1dfd0; display: flex; align-items: center; padding: 0 19px 0 16px; }
.addressbar > svg:nth-child(2) { margin-left: 21px; }
.addressbar > svg:nth-child(3) { margin-left: 22px; }
.omnibox { width: 1716px; height: 34px; flex: none; margin-left: 19px; border-radius: 17px; background: #f0e7e2; display: flex; align-items: center; padding: 0 16px 0 5px; }
.site { width: 24px; height: 24px; border-radius: 12px; background: #fff8f5; display: flex; align-items: center; justify-content: center; }
.url { margin-left: 8px; width: 1635px; font-size: 13.500px; letter-spacing: -.02px; white-space: nowrap; color: #52473f; }
.url b { font-weight: 400; color: #1f1a17; }
.star { margin-left: auto; }
.profile { margin: 0 27px 0 17px; color: #c0640f; }

/* meeting bar */
.meetingbar { height: 61px; flex: none; background: #fff; border-bottom: 1px solid #e6e6e6; display: flex; align-items: center; padding: 0 34px 0 23px; }
.timer { margin-left: 17px; font-size: 13px; }
.tools { display: flex; margin-left: auto; }
.tool { width: 56px; display: flex; flex-direction: column; align-items: center; font-size: 11.500px; line-height: 16px; gap: 3px; color: #333; letter-spacing: -.2px; padding-top: 1px; }
.count { display: flex; gap: 2px; align-items: center; }
.count b { font-size: 12px; font-weight: 600; }
.divider { width: 1px; height: 32px; background: #d1d1d1; margin: 0 8px 0 8px; }
.devices { display: flex; align-items: center; }
.caret { color: #333; }
.caret.first { margin: 0 4px 0 1px; }
.tool.mic { width: 58px; }
.tool.share { width: 66px; }
.leave { width: 88px; height: 32px; border-radius: 4px; background: #d13438; color: #fff; font-size: 13.500px; font-weight: 600; display: flex; align-items: center; justify-content: center; gap: 6px; margin-left: 7px; }

.stage { flex: 1; min-height: 0; display: flex; padding-left: 57px; }
.shared { width: 1566px; margin-top: 5px; height: 881px; display: flex; flex-direction: column; }

/* word title bar */
.wtitle { height: 24px; flex: none; background: #fff; display: flex; align-items: center; position: relative; z-index: 2; }
.qat { width: 92px; height: 21px; margin-left: 36px; border: 1px solid #a39aa0; border-left-color: transparent; border-radius: 0 11px 11px 0; display: flex; align-items: center; gap: 9px; padding: 0 9px 0 17px; }
.qat .dash { width: 4px; height: 1px; background: #999; margin: 0 -3px; }
.qatmore { margin-left: 6px; }
.doctitle { margin-left: 516px; font-size: 12px; letter-spacing: -.15px; white-space: nowrap; color: #222; }
.wwin { margin-left: auto; display: flex; gap: 37px; padding-right: 21px; margin-top: -2px; }
.orb { position: absolute; left: 4px; top: 4px; width: 37px; height: 37px; border-radius: 50%; background: radial-gradient(circle at 50% 35%, #fff, #e5e8ee 55%, #b5bdca); border: 1px solid #98a3b5; display: flex; align-items: center; justify-content: center; }
.wtabs { height: 24px; flex: none; background: #bfdbff; display: flex; align-items: flex-end; padding-left: 47px; font-size: 11px; color: #234; border-bottom: 1px solid #8db2e3; }
.wtabs span { height: 22px; line-height: 23px; color: #1c4382; white-space: nowrap; text-align: center; letter-spacing: -.35px; }
.wtabs span:nth-child(1) { width: 48px; } .wtabs span:nth-child(2) { width: 57px; } .wtabs span:nth-child(3) { width: 72px; }
.wtabs span:nth-child(4) { width: 87px; } .wtabs span:nth-child(5) { width: 50px; } .wtabs span:nth-child(6) { width: 71px; } .wtabs span:nth-child(7) { width: 29px; }
.wtabs .on { background: #eaf2fc; border: 1px solid #9fbfe8; border-bottom: 0; border-radius: 3px 3px 0 0; line-height: 21px; }
.help { margin: 0 5px 5px auto; }

/* ribbon */
.ribbon { height: 90px; flex: none; background: linear-gradient(#dbe6f5, #cfdff2 20%, #c8dcf2 80%, #d9f1fb); border: 1px solid #9dbbe0; border-top: 0; display: flex; padding: 3px; gap: 3px; }
.group { border: 1px solid #aac4e4; border-radius: 3px; display: flex; flex-direction: column; background: linear-gradient(#dfe8f5, #d0dff1 18%, #c9dbf0 60%, #d9e8f8); overflow: hidden; flex: none; }
.gbody { height: 67px; flex: none; display: flex; }
.glabel { flex: 1; background: #c1d9f1; color: #5b7fb3; font-size: 11px; line-height: 17px; display: flex; justify-content: center; position: relative; letter-spacing: -.2px; }
.glabel svg { position: absolute; right: 5px; top: 3px; }
.clip { width: 142px; } .font { width: 244px; } .para { width: 196px; } .styles { width: 855px; } .edit { width: 69px; }
.group span { white-space: nowrap; }
.paste { width: 41px; padding-left: 2px; display: flex; flex-direction: column; align-items: center; padding-top: 5px; font-size: 10.800px; line-height: 13px; color: #1c4382; gap: 4px; letter-spacing: -.3px; }
.clipcmds { padding: 0 0 0 6px; }
.cmd { height: 21px; display: flex; align-items: center; gap: 4px; font-size: 10.600px; color: #2b4a8a; letter-spacing: -.25px; }
.dim { color: #8f9cb0; }
.tri { display: inline-block; border: 2.500px solid transparent; border-top: 3px solid #5a6e8e; border-bottom: 0; width: 0; height: 0; flex: none; }
.tri.upt { border-top: 0; border-bottom: 3px solid #5a6e8e; }
.rows { flex-direction: column; padding: 8px 0 0 1px; gap: 10px; }
.para .rows { padding-left: 2px; }
.brow { display: flex; height: 20px; }
.box { height: 20px; border: 1px solid #a5bfdf; border-radius: 2px; display: flex; align-items: center; justify-content: space-around; font-family: "Liberation Serif", serif; font-size: 13px; color: #222; background: #d5e2f2; flex: none; }
.white { background: #f4f8fd; font-family: "Open Sans", sans-serif; font-size: 11.200px; letter-spacing: -.3px; justify-content: space-between; padding: 0 4px 0 2px; }
.f1 { width: 129px; } .f2 { width: 38px; } .f3 { width: 43px; margin-left: 3px; } .f4 { width: 24px; margin-left: 3px; }
.f5 { width: 174px; } .f6 { width: 63px; margin-left: 3px; }
.box sup, .box sub { font-size: 7px; line-height: 0; }
.box .big { font-size: 15px; }
.box .it { font-style: italic; font-weight: 700; }
.box u { font-weight: 700; } .box s { font-weight: 700; font-size: 11px; }
.hot { background: linear-gradient(#f9c777, #fdb84e 50%, #fddc8c); align-self: stretch; width: 20px; display: flex; align-items: center; justify-content: center; }
.box .hot { margin-left: -1px; }
.hl { border-bottom: 4px solid #f7f01a; font: 700 10px/12px "Liberation Sans", sans-serif; }
.fc { border-bottom: 4px solid #ee2211; font: 700 13px/12px "Liberation Serif", serif; padding: 0 3px; color: #3d5a9a; }
.p1 { width: 93px; } .p2 { width: 44px; margin-left: 2px; } .p3 { width: 23px; margin-left: 2px; } .p4 { width: 22px; margin-left: 3px; }
.p5 { width: 26px; margin-left: 3px; } .p6 { width: 63px; margin-left: 2px; }
.gallery { width: 790px; margin: 3px 0 4px 3px; display: flex; gap: 6px; background: #d5e4f5; flex: none; }
.sty { width: 66px; height: 51px; margin-top: 3px; background: #fff; display: flex; flex-direction: column; align-items: center; overflow: hidden; flex: none; }
.sty.sel { width: 71px; height: 56px; margin: 1px -3px 0 0; border: 3px solid #efae4e; border-radius: 2px; }
.sty p { height: 34px; line-height: 34px; white-space: nowrap; width: 62px; overflow: hidden; color: #111; }
.sty span { font-size: 11px; line-height: 14px; color: #2a2a6a; letter-spacing: -.25px; }
.sty.sel p { margin-top: -1px; width: 62px; }
.sty .cal { font: 13px/34px Lato, sans-serif; }
.sty .cam { font: 700 14.500px/34px "DejaVu Serif Condensed", "DejaVu Serif", serif; color: #3c5f94; letter-spacing: .2px; }
.sty .cam.c3 { font-size: 12px; color: #4f81bd; letter-spacing: 0; }
.sty .tim { font: 700 21.500px/34px "Liberation Serif", serif; }
.sty .ttl { font: 27px/27px "DejaVu Serif Condensed", "DejaVu Serif", serif; color: #1f3864; }
.sty .sub { font: italic 14px/34px "DejaVu Serif Condensed", "DejaVu Serif", serif; color: #5b87bd; letter-spacing: .5px; }
.sty .cal.it { font-style: italic; } .sty .gr { color: #808080; } .sty .cal.bl { color: #3f76bb; font-weight: 700; } .sty .cal.bd { font-weight: 700; }
.gscroll { width: 14px; margin-top: 3px; display: flex; flex-direction: column; }
.gscroll span { height: 20px; border: 1px solid #b5cbe6; background: #e2ecf8; display: flex; align-items: center; justify-content: center; }
.bar { box-shadow: 0 -3px 0 -2px #5a6e8e; }
.change { flex: 1; display: flex; flex-direction: column; align-items: center; padding-top: 5px; font-size: 11px; line-height: 13.500px; color: #2b4a8a; letter-spacing: -.3px; }
.change svg { margin-bottom: 7px; }
.drop { display: flex; align-items: center; gap: 4px; }
.editb { flex-direction: column; padding: 0 0 0 6px; }

/* document */
.canvas { height: 682px; flex: none; display: flex; justify-content: space-between; padding-top: 6px; background: linear-gradient(#a3c0ea, #7fa7da 18%, #6d94cc 38%, #5c80bb 60%, #4d7aaf 72%, #5580bf 85%, #6391d8); }
.page { width: 1418px; margin-left: 67px; background: #fff; border-left: 1px solid #44587c; border-right: 2px solid #38465c; box-shadow: 4px 0 3px #48628c66; padding-left: 167px; overflow: hidden; position: relative; color: #1a1a1a; }
.ln { height: 31px; display: grid; align-items: baseline; line-height: 31px; white-space: pre; }
.t { font-family: "Liberation Serif", serif; font-size: 27px; letter-spacing: .2px; }
.t.b { letter-spacing: .3px; }
.c { font-family: Lato, sans-serif; font-size: 23px; letter-spacing: .32px; }
.c.b { letter-spacing: .45px; }
.c.wide { letter-spacing: .5px; }
.m { font-family: "Liberation Mono", monospace; font-size: 23px; letter-spacing: .05px; color: #606060; }
.h { font-family: "DejaVu Serif Condensed", "DejaVu Serif", serif; font-weight: 700; font-size: 21.500px; letter-spacing: .65px; color: #4f81bd; }
.b { font-weight: 700; }
.dot { width: 9px; height: 9px; border-radius: 50%; background: #111; margin: 12px 0 0 42px; align-self: start; }
.sr, .sg { background: url("data:image/svg+xml,%3Csvg xmlns='http://www.w3.org/2000/svg' width='4' height='3'%3E%3Cpath d='M0 2.500L2 .5L4 2.500' fill='none' stroke='%23e0544c' stroke-width='.9'/%3E%3C/svg%3E") repeat-x left bottom; }
.sg { background-image: url("data:image/svg+xml,%3Csvg xmlns='http://www.w3.org/2000/svg' width='4' height='3'%3E%3Cpath d='M0 2.500L2 .5L4 2.500' fill='none' stroke='%233f9a50' stroke-width='.9'/%3E%3C/svg%3E"); }
.l1 { grid-template-columns: 304.500px 70px; margin-top: -5px; }
.l2 { grid-template-columns: 83px 130px 102px 152px 328px 10px; margin-top: 33px; }
.l2 .c.b:nth-child(3) { letter-spacing: .15px; }
.l3 { grid-template-columns: 83px 130px 80px 160px 87px 203px 10px; }
.l4 { grid-template-columns: 217px 300px; margin-top: 34px; }
.l5 { grid-template-columns: 83px 125px 400px; margin-top: 32px; }
.l6 { grid-template-columns: 83px 236px 500px; }
.l7 { grid-template-columns: 83px 125px 384.500px 40.500px 120px; }
.l8 { grid-template-columns: 500px; margin-top: 32px; }
.l9 { grid-template-columns: 26px 190px 94.500px 210px 56px 20px; margin-top: 37px; }
.l10, .l11 { grid-template-columns: 83px 166px 500px; }
.l10 { margin-top: 33px; }
.l12 { grid-template-columns: 111.500px 250px 39px 181px 100px; margin-top: 32px; }
.l13 { grid-template-columns: 83px 500px; margin-top: 33px; }
.l13 .h { letter-spacing: .5px; }
.l13 .h:first-child { padding-left: 42px; }
.ibeam { position: absolute; left: 1156px; top: 513px; }
.vscroll { width: 17px; margin: -1px 1px 0 0; display: flex; flex-direction: column; align-items: center; background: #a9c6f0; border-left: 1px solid #7d9fd0; padding-bottom: 5px; }
.split { width: 9px; height: 2px; background: #34496e; flex: none; }
.v1 { margin-top: 3px; } .v2 { margin: 7px 0 3px; } .v3 { margin-top: 3px; } .v4 { margin-top: 8px; }
.track { flex: 1; width: 15px; background: linear-gradient(#6e92c6, #6f97c8 30%, #7ba0cc); display: flex; flex-direction: column; align-items: center; justify-content: space-between; padding: 6px 0; position: relative; }
.track .tri { border-width: 5px 4px 0; border-top-color: #3a5583; }
.track .upt { border-width: 0 4px 5px; border-bottom-color: #3a5583; }
.thumb { position: absolute; left: 0; top: 127px; width: 15px; height: 99px; background: linear-gradient(90deg, #eef3fa, #dfe7f2 45%, #c2d0e2 50%, #d2deec); border: 1px solid #8598b8; }
.thumb::after { content: ""; position: absolute; left: 3px; top: 45px; width: 7px; height: 6px; background: #9dabb8; }

/* status bar */
.status { height: 21px; flex: none; margin-top: -1px; border-top: 1px solid #7590b0; background: linear-gradient(#d5e5fa, #b7d5f7 35%, #cfe0f7 60%, #d0e1f8); display: flex; align-items: center; font-size: 11.300px; line-height: 18px; color: #2a4a78; letter-spacing: -.25px; padding-right: 5px; position: relative; }
.s1 { width: 70px; padding: 0 0 2px 6px; } .s2 { width: 69px; padding: 0 0 2px 8px; border-left: 1px solid #a9c3e4; } .s3 { border-left: 1px solid #a9c3e4; padding: 0 7px; border-right: 1px solid #a9c3e4; }
.views { display: flex; align-items: center; gap: 6px; height: 20px; margin-left: auto; width: 92px; background: #d9e5f5; }
.views .hot { width: 18px; }
.pct { width: 40px; padding: 0 0 2px 7px; font-size: 10.800px; }
.zoomer { display: flex; align-items: center; width: 136px; }
.rnd { width: 16px; height: 16px; border: 1px solid #5d7396; border-radius: 50%; background: #eef4fc; font: 700 14px/13px "Liberation Sans", sans-serif; text-align: center; color: #3b4e70; flex: none; }
.rail { height: 2px; width: 54px; background: #8fabd0; } .r2 { width: 40px; }

/* shared taskbar */
.itask { height: 41px; flex: none; background: linear-gradient(90deg, #243a48, #20343f 35%, #1d3044 60%, #1a2742); display: flex; position: relative; color: #fff; }
.iwin { margin: 12px 0 0 17px; color: #dfe5e8; }
.apps { display: flex; margin-left: 16px; }
.apps span { width: 50.600px; height: 41px; display: flex; align-items: center; justify-content: center; }
.run { position: relative; }
.run::after { content: ""; position: absolute; left: 5px; right: 5px; bottom: 0; height: 3px; background: #76b9ed; }
.act { background: #4c6069; }
.run.act::after { left: 0; right: 0; }
.itray { margin-left: auto; display: flex; align-items: center; gap: 6.500px; padding-right: 20px; margin-right: 4px; border-right: 1px solid #5a6b80; }
.imic { margin: 0 3px 0 5px; }
.pen { margin-left: 3.500px; }
.iclock { width: 76px; margin-left: -2px; font-size: 12px; line-height: 19px; display: flex; flex-direction: column; align-items: center; letter-spacing: -.2px; }

/* participants */
.nametag { position: absolute; left: 8px; bottom: 8px; width: 82px; height: 25px; border-radius: 3px; background: rgba(60, 60, 60, .54); color: #fff; font-size: 12px; display: flex; align-items: center; justify-content: space-between; padding: 0 3.500px 0 4px; letter-spacing: -.1px; white-space: nowrap; }
.nametag.host { left: -43px; width: 116px; }
.people { width: 240px; margin-left: 57px; padding-top: 141px; display: flex; flex-direction: column; }
.tiles { display: grid; grid-template-columns: 108px 108px; gap: 12px; padding-left: 6px; }
.tile { height: 78px; border: 1px solid #d2dedd; border-radius: 5px; background: radial-gradient(circle at 0 0, #e8f8f1, transparent 70%), radial-gradient(circle at 100% 0, #e6f2f8, transparent 75%), #fbf8f5; display: flex; align-items: center; justify-content: center; position: relative; }
.tile.last { grid-column: 1 / 3; justify-self: center; width: 108px; }
.av { width: 49px; height: 49px; border-radius: 50%; font-size: 18px; font-weight: 600; display: flex; align-items: center; justify-content: center; box-shadow: 0 1px 3px #0003; }
.a1 { background: #fdeec6; color: #835b00; } .a2 { background: #ecd3e2; color: #6b2148; } .a3 { background: #d5d3ea; color: #2d2560; } .a4 { background: #cfe1d6; color: #0f4b2c; } .a5 { background: #d5e3ea; color: #1d4452; }
.a6 { background: #dadfd4; color: #2c4218; } .a7 { background: #fbdcd5; color: #8f3020; } .a8 { background: #d5d3ea; color: #2b2766; } .a9 { background: #daf1f2; color: #2f6c6c; } .a10 { background: #c7d3e8; color: #00245b; }
.pager { height: 34px; margin: 6px 0 8px; background: #f4f4f4; display: flex; align-items: center; justify-content: center; gap: 12px; font-size: 13.500px; letter-spacing: -.2px; }
.self { width: 228px; height: 123px; margin-left: 6px; }
.self .av { width: 60px; height: 60px; font-size: 23px; }
.self .nametag { width: 125px; letter-spacing: .15px; }

/* taskbar */
.taskbar { height: 40px; flex: none; background: linear-gradient(90deg, #1f3942, #203640 45%, #1e3142 65%, #18253f); display: flex; color: #fff; }
.start { width: 48px; display: flex; align-items: center; justify-content: center; }
.search { width: 344px; background: #f2f2f2; border: 1px solid #c8c8c8; display: flex; align-items: center; gap: 11px; padding-left: 11px; color: #333; font-size: 14.500px; letter-spacing: -.33px; }
.tapps { display: flex; }
.tapps span { width: 49.100px; display: flex; align-items: center; justify-content: center; }
.tapps .run::after { left: 4px; right: 4px; height: 2px; }
.tapps .run.act::after { left: 0; right: 0; }
.tray { margin-left: auto; display: flex; align-items: center; margin-right: 4px; border-right: 1px solid #5a6b80; gap: 7px; padding-right: 20px; font-size: 12px; }
.lang { margin-left: 2px; letter-spacing: -.5px; }
.clock { width: 72px; display: flex; flex-direction: column; align-items: center; font-size: 11.700px; line-height: 18px; letter-spacing: -.3px; margin: 0 3px 0 -1px; }
.notif { position: relative; }
.notif b { position: absolute; left: 8px; top: 8px; width: 16px; height: 16px; border-radius: 50%; background: #3c4450; border: 1px solid #8b95a0; font-size: 11px; line-height: 14px; text-align: center; }
```
